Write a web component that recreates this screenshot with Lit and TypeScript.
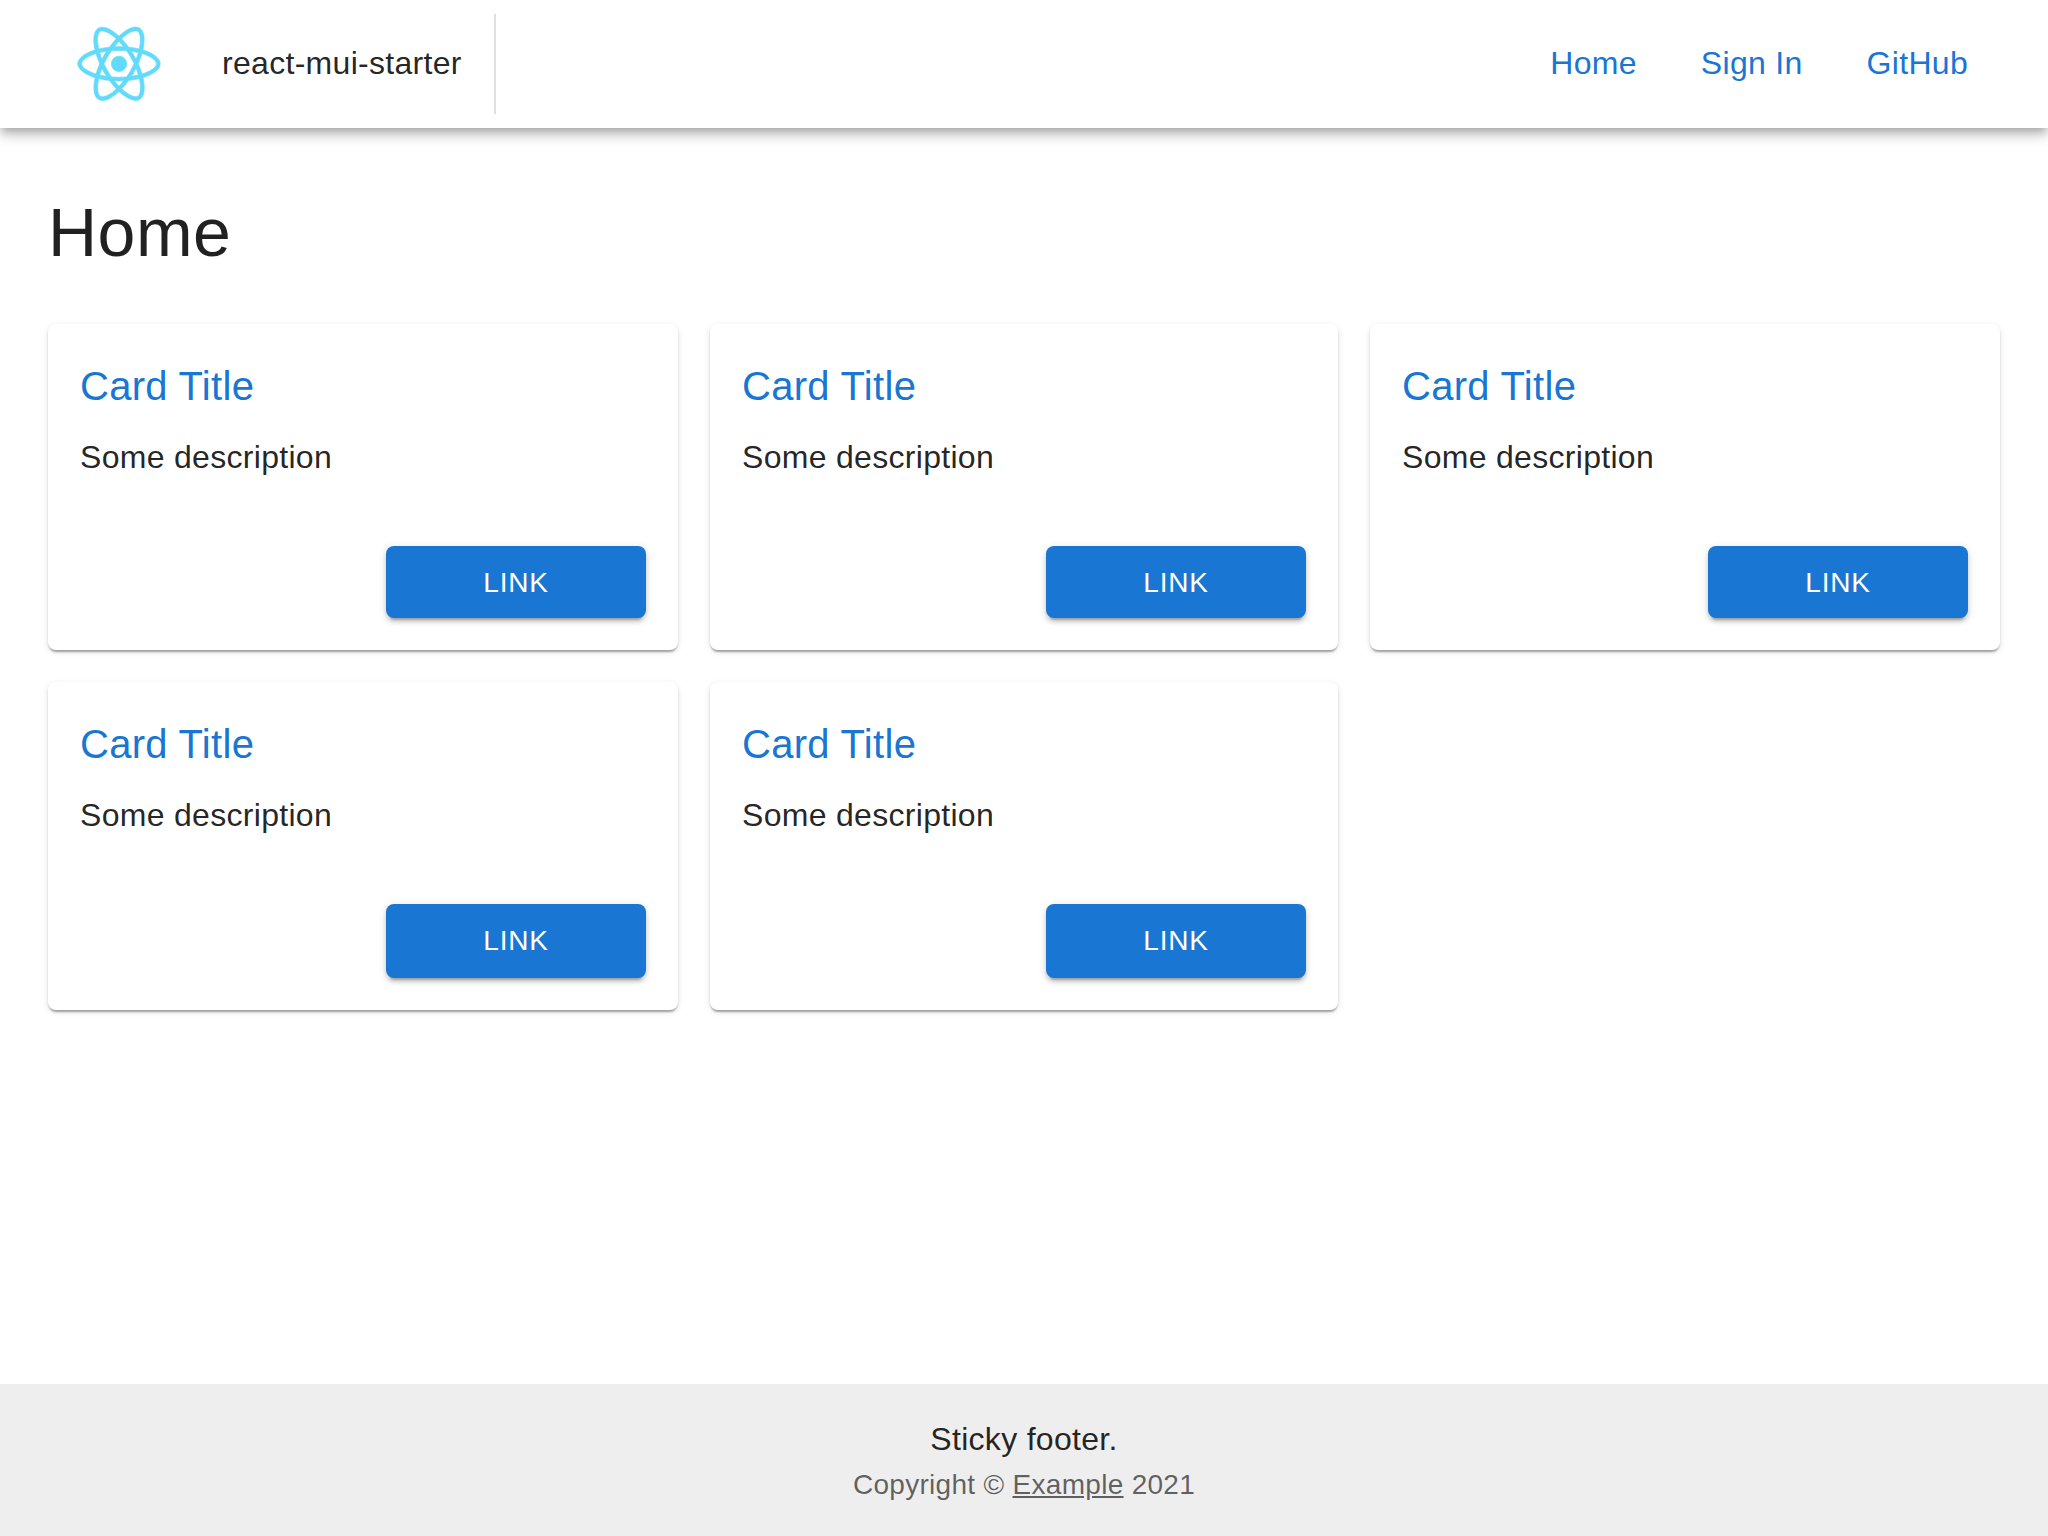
import { LitElement, html, css } from "lit";
import { customElement, property } from "lit/decorators.js";

const FONT = css`"Helvetica", "Liberation Sans", Arial, sans-serif`;

@customElement("react-logo")
class ReactLogo extends LitElement {
  static styles = css`
    :host { display: block; flex: none; }
    .logo { display: block; width: 142px; height: 100px; }
  `;
  render() {
    return html`<svg class="logo" viewBox="0 0 841.9 595.3" fill="#61dafb" stroke="#61dafb" stroke-width="4">
      <path d="M666.3 296.5c0-32.5-40.7-63.3-103.1-82.4 14.4-63.6 8-114.2-20.2-130.4-6.5-3.8-14.1-5.6-22.4-5.6v22.3c4.6 0 8.3.9 11.4 2.6 13.6 7.8 19.5 37.5 14.9 75.7-1.1 9.4-2.9 19.3-5.1 29.4-19.6-4.8-41-8.5-63.5-10.9-13.5-18.5-27.5-35.3-41.6-50 32.6-30.3 63.2-46.9 84-46.9V78c-27.5 0-63.5 19.6-99.9 53.6-36.4-33.8-72.4-53.2-99.9-53.2v22.3c20.7 0 51.4 16.5 84 46.6-14 14.7-28 31.4-41.3 49.9-22.6 2.4-44 6.1-63.6 11-2.3-10-4-19.7-5.2-29-4.7-38.2 1.1-67.9 14.6-75.8 3-1.8 6.9-2.6 11.5-2.6V78.5c-8.4 0-16 1.8-22.6 5.6-28.1 16.2-34.4 66.7-19.9 130.1-62.2 19.2-102.7 49.9-102.7 82.3 0 32.5 40.7 63.3 103.1 82.4-14.4 63.6-8 114.2 20.2 130.4 6.5 3.8 14.1 5.6 22.5 5.6 27.5 0 63.5-19.6 99.9-53.6 36.4 33.8 72.4 53.2 99.9 53.2 8.4 0 16-1.8 22.6-5.6 28.1-16.2 34.4-66.7 19.9-130.1 62-19.1 102.5-49.9 102.5-82.3zm-130.2-66.7c-3.7 12.9-8.3 26.2-13.5 39.5-4.1-8-8.4-16-13.1-24-4.6-8-9.5-15.8-14.4-23.4 14.2 2.1 27.9 4.7 41 7.9zm-45.8 106.5c-7.8 13.5-15.8 26.3-24.1 38.2-14.9 1.3-30 2-45.2 2-15.1 0-30.2-.7-45-1.9-8.3-11.9-16.4-24.6-24.2-38-7.6-13.1-14.5-26.4-20.8-39.8 6.2-13.4 13.2-26.8 20.7-39.9 7.8-13.5 15.8-26.3 24.1-38.2 14.9-1.3 30-2 45.2-2 15.1 0 30.2.7 45 1.9 8.3 11.9 16.4 24.6 24.2 38 7.6 13.1 14.5 26.4 20.8 39.8-6.3 13.4-13.2 26.8-20.7 39.9zm32.3-13c5.4 13.4 10 26.8 13.8 39.8-13.1 3.2-26.9 5.9-41.2 8 4.9-7.7 9.8-15.6 14.4-23.7 4.6-8 8.9-16.1 13-24.1zM421.2 430c-9.3-9.6-18.6-20.3-27.8-32 9 .4 18.2.7 27.5.7 9.4 0 18.7-.2 27.8-.7-9 11.7-18.3 22.4-27.5 32zm-74.4-58.9c-14.2-2.1-27.9-4.7-41-7.9 3.7-12.9 8.3-26.2 13.5-39.5 4.1 8 8.4 16 13.1 24 4.7 8 9.5 15.8 14.4 23.4zM420.7 163c9.3 9.6 18.6 20.3 27.8 32-9-.4-18.2-.7-27.5-.7-9.4 0-18.7.2-27.8.7 9-11.7 18.3-22.4 27.5-32zm-74 58.9c-4.9 7.7-9.8 15.6-14.4 23.7-4.6 8-8.9 16-13 24-5.4-13.4-10-26.8-13.8-39.8 13.1-3.1 26.9-5.8 41.2-7.9zm-90.5 125.2c-35.4-15.1-58.3-34.9-58.3-50.6 0-15.7 22.9-35.6 58.3-50.6 8.6-3.7 18-7 27.7-10.1 5.7 19.6 13.2 40 22.5 60.9-9.2 20.8-16.6 41.1-22.2 60.6-9.9-3.1-19.3-6.5-28-10.2zM310 490c-13.6-7.8-19.5-37.5-14.9-75.7 1.1-9.4 2.9-19.3 5.1-29.4 19.6 4.8 41 8.5 63.5 10.9 13.5 18.5 27.5 35.3 41.6 50-32.6 30.3-63.2 46.9-84 46.9-4.5-.1-8.3-1-11.3-2.7zm237.2-76.2c4.7 38.2-1.1 67.9-14.6 75.8-3 1.8-6.9 2.6-11.5 2.6-20.7 0-51.4-16.5-84-46.6 14-14.7 28-31.4 41.3-49.9 22.6-2.4 44-6.1 63.6-11 2.3 10.1 4.1 19.8 5.2 29.1zm38.5-66.7c-8.6 3.7-18 7-27.7 10.1-5.7-19.6-13.2-40-22.5-60.9 9.2-20.8 16.6-41.1 22.2-60.6 9.9 3.1 19.3 6.5 28.1 10.2 35.4 15.1 58.3 34.9 58.3 50.6-.1 15.7-23 35.6-58.4 50.6z"/>
      <circle cx="420.9" cy="296.5" r="45.7"/>
    </svg>`;
  }
}

@customElement("info-card")
class InfoCard extends LitElement {
  @property() heading = "";
  @property() description = "";
  static styles = css`
    :host { display: flex; }
    .card {
      box-sizing: border-box; flex: 1;
      display: flex; flex-direction: column;
      padding: 30px 32px 32px;
      border-radius: 8px;
      background: #fff;
      box-shadow: 0 4px 2px -2px rgba(0,0,0,.2), 0 2px 2px 0 rgba(0,0,0,.14), 0 2px 6px 0 rgba(0,0,0,.12);
    }
    .title {
      margin: 0 0 15px;
      font-size: 40px; font-weight: 400; line-height: 64px;
      letter-spacing: .0075em;
      color: #1976d2;
    }
    .text { margin: 0; font-size: 32px; line-height: 48px; letter-spacing: .00938em; }
    .actions { flex: 1; display: flex; justify-content: flex-end; align-items: stretch; padding-top: 65px; }
    .button {
      box-sizing: border-box;
      display: block; text-align: center; text-decoration: none;
      width: 260px; padding: 12px 32px 0;
      border-radius: 8px;
      background: #1976d2; color: #fff;
      font-size: 28px; line-height: 49px;
      letter-spacing: .02857em; text-transform: uppercase;
      box-shadow: 0 6px 2px -4px rgba(0,0,0,.2), 0 4px 4px 0 rgba(0,0,0,.14), 0 2px 10px 0 rgba(0,0,0,.12);
    }
  `;
  render() {
    return html`<article class="card">
      <h2 class="title">${this.heading}</h2>
      <p class="text">${this.description}</p>
      <div class="actions"><a class="button" href="#">Link</a></div>
    </article>`;
  }
}

@customElement("app-root")
class AppRoot extends LitElement {
  static styles = css`
    :host {
      display: flex; flex-direction: column;
      min-height: 100vh;
      background: #fff; color: rgba(0,0,0,.87);
      font-family: ${FONT}; font-size: 32px; line-height: 48px;
      letter-spacing: .00938em;
    }
    .bar {
      box-sizing: border-box; height: 128px; padding: 0 48px;
      display: flex; align-items: center;
      background: #fff;
      box-shadow: 0 4px 8px -2px rgba(0,0,0,.2), 0 8px 10px 0 rgba(0,0,0,.14), 0 2px 20px 0 rgba(0,0,0,.12);
    }
    .name { margin: 0 32px; padding-bottom: 2px; white-space: nowrap; }
    .divider { width: 2px; height: 100px; background: rgba(0,0,0,.12); }
    .nav { margin-left: auto; padding: 0 32px 2px 0; display: flex; gap: 64px; }
    .link { color: #1976d2; text-decoration: none; }
    .main { padding: 62px 48px 0; flex: 1; }
    .heading {
      margin: 0 0 50px;
      font-size: 68px; font-weight: 400; line-height: 84px; letter-spacing: .00735em;
    }
    .grid {
      display: grid; gap: 32px;
      grid-template-columns: 630fr 628fr 630fr;
      grid-template-rows: 326px 328px;
    }
    .footer {
      box-sizing: border-box; height: 152px; padding: 31px 32px;
      background: #eee; text-align: center;
    }
    .line { margin: 0 0 2px; }
    .copy { margin: 0; font-size: 28px; line-height: 40px; letter-spacing: .01071em; color: rgba(0,0,0,.6); }
    .example { color: inherit; text-decoration: underline; }
  `;
  cards = Array.from({ length: 5 }, () => ({ title: "Card Title", text: "Some description" }));
  render() {
    return html`
      <header class="bar">
        <react-logo></react-logo>
        <span class="name">react-mui-starter</span>
        <span class="divider"></span>
        <nav class="nav">
          ${["Home", "Sign In", "GitHub"].map((l) => html`<a class="link" href="#">${l}</a>`)}
        </nav>
      </header>
      <main class="main">
        <h1 class="heading">Home</h1>
        <section class="grid">
          ${this.cards.map((c) => html`<info-card .heading=${c.title} .description=${c.text}></info-card>`)}
        </section>
      </main>
      <footer class="footer">
        <p class="line">Sticky footer.</p>
        <p class="copy">Copyright © <a class="example" href="#">Example</a> 2021</p>
      </footer>`;
  }
}
